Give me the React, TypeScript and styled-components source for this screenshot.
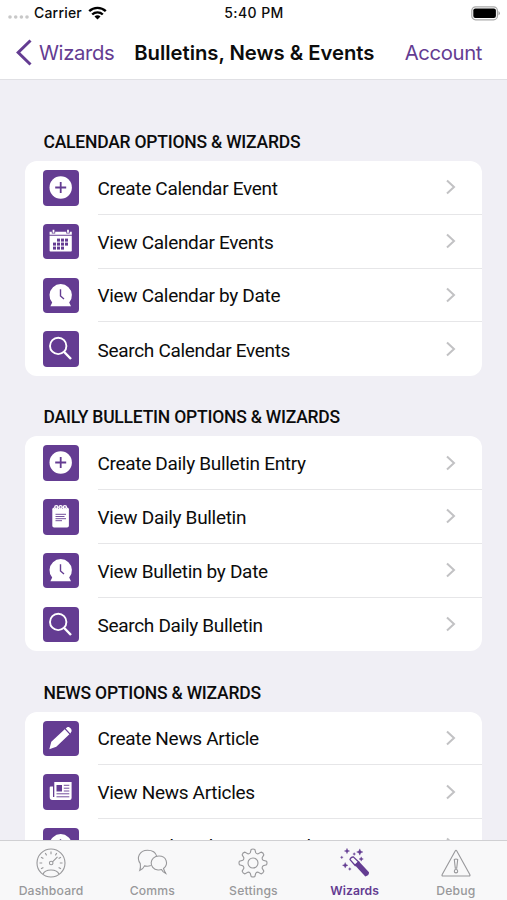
import React from "react";
import styled, { createGlobalStyle } from "styled-components";

const PURPLE = "#643c92";
const GRAY = "#98989b";

const Global = createGlobalStyle`
  * { box-sizing: border-box; }
  body { margin: 0; background: #f0eff5; overflow: hidden; }
`;

const Screen = styled.div`
  width: 507px;
  height: 900px;
  display: flex;
  flex-direction: column;
  overflow: hidden;
  background: #f0eff5;
  color: #0c0c0c;
  font-family: Inter, sans-serif;
`;

const StatusBar = styled.div`
  height: 26px;
  flex: none;
  display: grid;
  grid-template-columns: 1fr auto 1fr;
  align-items: center;
  padding: 0 7px 0 8px;
  background: #fff;
  font-size: 14px;
  font-weight: 500;
  line-height: 26px;
`;

const Carrier = styled.div`
  display: flex;
  align-items: center;
`;

const SignalDots = styled.svg`
  margin-top: 8px;
`;

const CarrierName = styled.span`
  margin: 0 6px 0 5px;
  letter-spacing: 0.2px;
`;

const Clock = styled.span`
  letter-spacing: 0.4px;
`;

const Battery = styled.div`
  display: flex;
  justify-content: flex-end;
`;

const NavBar = styled.div`
  height: 54px;
  flex: none;
  display: flex;
  align-items: center;
  padding: 0 25px 0 16px;
  background: #fff;
  border-bottom: 1.5px solid #e0e0e4;
  line-height: 52px;
`;

const NavLink = styled.span`
  color: ${PURPLE};
  font-size: 20.3px;
  letter-spacing: -0.38px;
`;

const BackArrow = styled.svg`
  margin-right: 7px;
  flex: none;
`;

const NavTitle = styled.h1`
  margin: 0 auto 0 20px;
  font-size: 20.3px;
  font-weight: 600;
  letter-spacing: -0.03px;
  white-space: nowrap;
`;

const Content = styled.main`
  flex: 1;
  min-height: 0;
  overflow: hidden;
  padding: 41px 25px 0;
  font-family: Roboto, sans-serif;
`;

const Section = styled.section`
  height: 275.25px;
`;

const Heading = styled.h2`
  margin: 0;
  height: 40px;
  padding: 11px 0 0 18.5px;
  font-size: 17.5px;
  line-height: 20px;
  font-weight: 500;
  letter-spacing: -0.22px;
`;

const Card = styled.div`
  height: 215px;
  border-radius: 12px;
  background: #fff;
  overflow: hidden;
`;

const Row = styled.div`
  height: 53.75px;
  display: flex;
  padding-left: 18px;
  align-items: center;
`;

const Tile = styled.div`
  width: 36px;
  height: 35.5px;
  flex: none;
  border-radius: 4px;
  background: ${PURPLE};
  display: flex;
`;

const RowBody = styled.div<{ $last: boolean }>`
  flex: 1;
  height: 100%;
  margin-left: 18.5px;
  padding-right: 25.5px;
  display: flex;
  align-items: center;
  justify-content: space-between;
  border-bottom: ${(p) => (p.$last ? "0" : "1px solid #e6e6e8")};
  white-space: nowrap;
`;

const Label = styled.span`
  padding-top: 3px;
  font-size: 19px;
  line-height: 24px;
  letter-spacing: -0.31px;
`;

const TabBar = styled.nav`
  height: 60px;
  flex: none;
  display: grid;
  grid-template-columns: repeat(5, 101.2px);
  padding-left: 0.5px;
  background: #f8f8f9;
  border-top: 1px solid #d0d0d3;
`;

const Tab = styled.div<{ $active?: boolean }>`
  display: flex;
  flex-direction: column;
  align-items: center;
  padding-top: 5px;
  color: ${(p) => (p.$active ? PURPLE : GRAY)};
  font-size: 12.2px;
  font-weight: ${(p) => (p.$active ? 600 : 500)};
  line-height: 15px;
  letter-spacing: ${(p) => (p.$active ? 0.05 : 0.15)}px;
`;

const TabIcon = styled.svg`
  width: 34px;
  height: 34px;
  margin-bottom: 3px;
  flex: none;
  fill: none;
  stroke: currentColor;
  stroke-width: 1.1;
`;

type IconName = "plus" | "calendar" | "clock" | "search" | "notepad" | "pencil" | "news";

const calendarRows = [
  { y: 14.6, xs: [14, 18, 22] },
  { y: 18.6, xs: [10, 14, 18, 22] },
  { y: 22.6, xs: [10, 14, 18] },
];

const CalendarCells = () => (
  <g fill={PURPLE}>
    {calendarRows.flatMap(({ y, xs }) =>
      xs.map((x) => <rect key={`${x}-${y}`} x={x} y={y} width="3" height="3" />)
    )}
  </g>
);

const glyphs: Record<IconName, React.ReactNode> = {
  plus: (
    <>
      <circle cx="17.7" cy="17.5" r="11.2" fill="#fff" />
      <path d="M17.7 12v11M12.2 17.5h11" stroke={PURPLE} strokeWidth="1.8" />
    </>
  ),
  calendar: (
    <>
      <path d="M6.6 7.8h22.2v3H6.6zM6.6 11.7h22.2v15q0 .8-.8.8H7.4q-.8 0-.8-.8z" fill="#fff" />
      <path d="M10.5 6v3.5M25 6v3.5" stroke={PURPLE} strokeWidth="3.4" />
      <path d="M10.5 5.8v3M25 5.8v3" stroke="#fff" strokeWidth="1.8" />
      <CalendarCells />
    </>
  ),
  clock: (
    <>
      <path d="M9.2 24.6A11.2 11.2 0 1 1 26.2 24.6L28 28.3H7.4z" fill="#fff" />
      <path d="M17.5 11.3V18l3.5 3" fill="none" stroke={PURPLE} strokeWidth="1.4" />
    </>
  ),
  search: (
    <g fill="none" stroke="#fff">
      <circle cx="15.2" cy="14.9" r="8.2" strokeWidth="1.9" />
      <path d="M21.2 21l6.8 7" strokeWidth="2.5" />
    </g>
  ),
  notepad: (
    <>
      <rect x="9.3" y="8.5" width="16.6" height="20" rx="1.8" fill="#fff" />
      <path d="M11.5 9.3h12.4" stroke={PURPLE} strokeWidth="1" />
      <g fill="none" stroke="#fff" strokeWidth="1.3">
        <circle cx="13.3" cy="8.2" r="1.6" />
        <circle cx="17.6" cy="8.2" r="1.6" />
        <circle cx="21.9" cy="8.2" r="1.6" />
      </g>
      <path d="M12.5 15.3h10.5M12.5 17.5h9M12.5 19.7h10.5M12.5 21.7h6.5" stroke={PURPLE} strokeWidth=".9" />
    </>
  ),
  pencil: (
    <path d="M6.3 28.3l2-7.5L21.7 8.3l4.7 5L13.3 25.8zM22.7 7.4l1.5-1.2c2-1 5.2 2 4.3 4.2L27.3 12.4z" fill="#fff" />
  ),
  news: (
    <>
      <path d="M11.3 8h17.3v16q0 2-2 2H9.4q-2.7-.2-2.700-3V13.500q0-1 1-1h2.300V23h1.300z" fill="#fff" />
      <path d="M13.5 11h5.5v6.5h-5.5z" fill={PURPLE} />
      <path d="M20.8 11.3h5.5M20.8 14.2h5.5M20.8 17h5.5M13.5 19.8h12.8M13.5 22.8h12.8" stroke={PURPLE} strokeWidth=".9" />
    </>
  ),
};

const TileIcon = ({ name }: { name: IconName }) => (
  <Tile>
    <svg width="35.5" height="35.5" viewBox="0 0 35.5 35.5">{glyphs[name]}</svg>
  </Tile>
);

const Chevron = () => (
  <svg width="12" height="16" viewBox="0 0 12 16" fill="none" stroke="#c2c2c4" strokeWidth="2">
    <path d="M2 1.5l7 6.5-7 6.5" />
  </svg>
);

type Item = [IconName, string];
const sections: { title: string; items: Item[] }[] = [
  {
    title: "CALENDAR OPTIONS & WIZARDS",
    items: [
      ["plus", "Create Calendar Event"],
      ["calendar", "View Calendar Events"],
      ["clock", "View Calendar by Date"],
      ["search", "Search Calendar Events"],
    ],
  },
  {
    title: "DAILY BULLETIN OPTIONS & WIZARDS",
    items: [
      ["plus", "Create Daily Bulletin Entry"],
      ["notepad", "View Daily Bulletin"],
      ["clock", "View Bulletin by Date"],
      ["search", "Search Daily Bulletin"],
    ],
  },
  {
    title: "NEWS OPTIONS & WIZARDS",
    items: [
      ["pencil", "Create News Article"],
      ["news", "View News Articles"],
      ["clock", "View Archived News Articles"],
    ],
  },
];

const polar = (r: number, deg: number) => {
  const a = (deg * Math.PI) / 180;
  return `${(17 + r * Math.cos(a)).toFixed(2)} ${(17 + r * Math.sin(a)).toFixed(2)}`;
};

const gaugeTicks = [150, 180, 210, 240, 270, 300, 330, 0, 30]
  .map((d) => `M${polar(8.8, d)}L${polar(11.5, d)}`)
  .join("");

const gearPath =
  Array.from({ length: 8 }, (_, i) => {
    const d = i * 45 - 90;
    return `${i ? "L" : "M"}${polar(10.6, d - 15)}L${polar(13.6, d - 8)}Q${polar(14.5, d)} ${polar(13.6, d + 8)}L${polar(10.6, d + 15)}Q${polar(9.7, d + 22.5)} ${polar(10.6, d + 30)}`;
  }).join("") + "Z";

const sparkle = (x: number, y: number, r: number) =>
  `M${x} ${y - r}L${x + r * 0.3} ${y - r * 0.3}L${x + r} ${y}L${x + r * 0.3} ${y + r * 0.3}L${x} ${y + r}L${x - r * 0.3} ${y + r * 0.3}L${x - r} ${y}L${x - r * 0.3} ${y - r * 0.3}Z`;

const sparkles = [
  [9, 5, 2.7],
  [21.8, 6, 3.2],
  [7.2, 19.3, 2.8],
  [23.2, 13, 2.2],
  [3.8, 11.3, 1.4],
  [16.2, 8, 1.4],
  [11.8, 23, 1.4],
]
  .map(([x, y, r]) => sparkle(x, y, r))
  .join("");

export default function App() {
  return (
    <Screen>
      <Global />
      <StatusBar>
        <Carrier>
          <SignalDots width="21" height="4" viewBox="0 0 21 4" fill="#c8c8c8">
            {[2, 7.7, 13.4, 19].map((x) => <circle key={x} cx={x} cy="2" r="1.8" />)}
          </SignalDots>
          <CarrierName>Carrier</CarrierName>
          <svg width="19" height="14" viewBox="0 0 19 14" fill="none" stroke="#000" strokeWidth="2.4">
            <path d="M1.2 5.2a12 12 0 0 1 16.6 0M4.2 8.5a7.6 7.6 0 0 1 10.6 0" />
            <path d="M9.5 13.6l-3-3a4.2 4.2 0 0 1 6 0z" fill="#000" stroke="none" />
          </svg>
        </Carrier>
        <Clock>5:40 PM</Clock>
        <Battery>
          <svg width="29" height="15" viewBox="0 0 29 15">
            <rect x=".8" y=".8" width="25.6" height="13" rx="3.8" fill="#fff" stroke="#a9a9a9" strokeWidth="1.2" />
            <rect x="2.3" y="2.6" width="22.6" height="9.4" rx="2" />
            <path d="M27.5 5v4.5q1.3-.6 1.3-2.2T27.5 5z" fill="#999" />
          </svg>
        </Battery>
      </StatusBar>
      <NavBar>
        <BackArrow width="16" height="27" viewBox="0 0 16 27" fill="none" stroke={PURPLE} strokeWidth="3">
          <path d="M14.5 1.5L2.2 13.5l12.3 12" />
        </BackArrow>
        <NavLink>Wizards</NavLink>
        <NavTitle>Bulletins, News &amp; Events</NavTitle>
        <NavLink>Account</NavLink>
      </NavBar>
      <Content>
        {sections.map((s) => (
          <Section key={s.title}>
            <Heading>{s.title}</Heading>
            <Card>
              {s.items.map(([icon, label], i) => (
                <Row key={label}>
                  <TileIcon name={icon} />
                  <RowBody $last={i === 3}>
                    <Label>{label}</Label>
                    <Chevron />
                  </RowBody>
                </Row>
              ))}
            </Card>
          </Section>
        ))}
      </Content>
      <TabBar>
        <Tab>
          <TabIcon viewBox="0 0 34 34">
            <circle cx="17" cy="17" r="14" />
            <path d={gaugeTicks} />
            <path d="M9 28.2q1.5-4.2 8-4.2t8 4.2M18.5 15.8l5-5" />
            <circle cx="17.2" cy="17" r="1.8" />
          </TabIcon>
          Dashboard
        </Tab>
        <Tab>
          <TabIcon viewBox="0 0 34 34">
            <path d="M15.8 19.6q-3 1.2-6.3.3-1.5 3.5-4.8 4.7 1.2-2.8.6-7C1 12 4.5 4.3 12.5 4.3c5 0 8.3 2.5 9.3 6" />
            <path d="M28.5 22.5c5.5-4.5 3-12.5-4.5-12.5-10 0-10.5 13-1 14q2 .2 3.5-.4 1.5 3 4.3 4-1.3-2-2.3-5.1z" />
          </TabIcon>
          Comms
        </Tab>
        <Tab>
          <TabIcon viewBox="0 0 34 34">
            <path d={gearPath} />
            <circle cx="17" cy="17" r="5" />
          </TabIcon>
          Settings
        </Tab>
        <Tab $active>
          <TabIcon viewBox="0 0 34 34">
            <path d="M12 13.6q.5-2.6 3.3-2.8L21 16.3l-3.8 3.2z" strokeWidth="1.3" />
            <path d="M16.5 18.8l4-3.7L31 26.3q.3 3.2-3.7 4.2z" fill="currentColor" stroke="none" />
            <path d={sparkles} fill="currentColor" strokeWidth=".3" />
          </TabIcon>
          Wizards
        </Tab>
        <Tab>
          <TabIcon viewBox="0 0 34 34">
            <path d="M16.2 5q.8-1.5 1.6 0l13 23.5q.7 1.5-.8 1.5H4q-1.5 0-.8-1.5z" />
            <path d="M15.3 13.5q1.7-1 3.4 0l-1 8.7h-1.4z" />
            <circle cx="17" cy="25.2" r="1.7" />
          </TabIcon>
          Debug
        </Tab>
      </TabBar>
    </Screen>
  );
}
